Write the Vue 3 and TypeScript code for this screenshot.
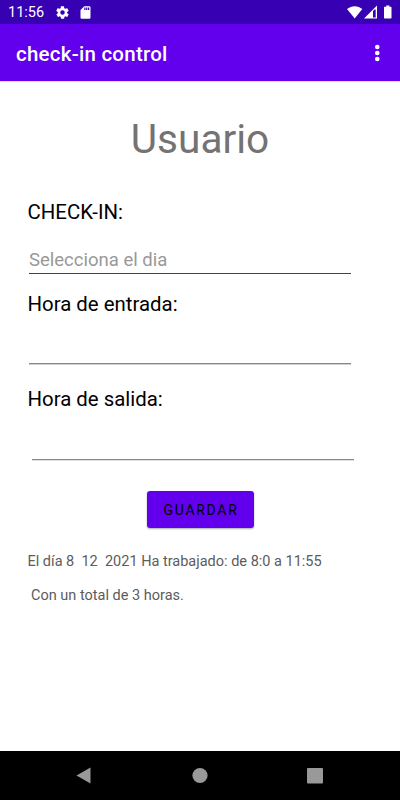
<script setup lang="ts">
import { ref } from 'vue'

const dia = ref('')
const entrada = ref('')
const salida = ref('')
const resumen = 'El día 8  12  2021 Ha trabajado: de 8:0 a 11:55'
const total = 'Con un total de 3 horas.'
</script>

<template>
  <div class="screen">
    <header class="status">
      <span class="clock">11:56</span>
      <svg class="gear" viewBox="0 0 24 24"><path d="M19.4 13c0-.3.1-.6.1-1s0-.7-.1-1l2.1-1.6c.2-.2.3-.4.1-.7l-2-3.4c-.1-.3-.4-.3-.6-.3l-2.5 1c-.5-.4-1.1-.7-1.7-1l-.4-2.6c0-.3-.2-.4-.5-.4h-4c-.2 0-.4.2-.5.4l-.4 2.6c-.6.3-1.1.6-1.7 1l-2.5-1c-.2-.1-.5 0-.6.3l-2 3.4c-.1.2-.1.5.1.7L4.6 11c-.1.3-.1.7-.1 1s0 .7.1 1l-2.1 1.6c-.2.2-.3.4-.1.7l2 3.4c.1.3.4.3.6.3l2.5-1c.5.4 1.1.7 1.7 1l.4 2.6c.1.3.3.4.5.4h4c.3 0 .5-.2.5-.4l.4-2.6c.6-.3 1.2-.6 1.7-1l2.5 1c.2.1.5 0 .6-.3l2-3.4c.1-.2.1-.5-.1-.7zM12 15.6a3.6 3.6 0 1 1 0-7.2 3.6 3.6 0 0 1 0 7.2z" /></svg>
      <svg class="card" viewBox="0 0 24 24"><path d="M18 2h-8L4 8v12c0 1.1.9 2 2 2h12c1.1 0 2-.9 2-2V4c0-1.1-.9-2-2-2zm-6 6h-2V4h2v4zm3 0h-2V4h2v4zm3 0h-2V4h2v4z" /></svg>
      <span class="spacer"></span>
      <svg class="system" viewBox="0 0 48 16">
        <path d="M1 4.1C5.5.2 12 .2 16.300 4.100L8.700 13.500z" />
        <path d="M18 13.500 31 .500V13.500zM27 6V12.500h2.700V4.500h-1.200z" fill-rule="evenodd" />
        <path d="M40.200.500h3.200v1.200h1.400q.7 0 .7.700v10.400q0 .7-.7.700h-6.100q-.7 0-.7-.7V2.400q0-.7.700-.7h1.500z" />
      </svg>
    </header>
    <div class="appbar">
      <h1>check-in control</h1>
      <button class="more" aria-label="Más opciones">
        <svg viewBox="0 0 6 18"><circle cx="3.300" cy="3" r="2.300" /><circle cx="3.300" cy="9" r="2.300" /><circle cx="3.300" cy="15" r="2.300" /></svg>
      </button>
    </div>
    <main class="content">
      <h2>Usuario</h2>
      <label class="label check" for="dia">CHECK-IN:</label>
      <input id="dia" v-model="dia" class="field day" placeholder="Selecciona el dia" />
      <label class="label entry" for="entrada">Hora de entrada:</label>
      <input id="entrada" v-model="entrada" class="field start" />
      <label class="label exit" for="salida">Hora de salida:</label>
      <input id="salida" v-model="salida" class="field end" />
      <button class="save">GUARDAR</button>
      <p class="summary">{{ resumen }}</p>
      <p class="total">{{ total }}</p>
    </main>
    <nav class="navbar">
      <svg viewBox="0 0 400 49">
        <path d="M76.500 24.500 90.500 16.500V32.500z" />
        <circle cx="200" cy="24.500" r="7.600" />
        <rect x="307" y="17" width="16" height="15.500" rx="1" />
      </svg>
    </nav>
  </div>
</template>

<style>
body {
  margin: 0;
  background: #fff;
}
</style>

<style scoped>
.screen {
  width: 400px;
  height: 800px;
  display: flex;
  flex-direction: column;
  overflow: hidden;
  background: #fff;
  font-family: Roboto, sans-serif;
}
svg {
  display: block;
  fill: #fff;
}
h1, h2, p {
  margin: 0;
  font-weight: 400;
}
button {
  border: 0;
  padding: 0;
  font-family: inherit;
}
.status {
  height: 24px;
  flex: none;
  display: flex;
  align-items: center;
  padding: 0 6px 0 8px;
  background: #3700b3;
  color: #fff;
}
.clock {
  width: 47px;
  font-size: 14.500px;
  line-height: 24px;
  padding-top: 2px;
}
.gear {
  width: 15px;
  height: 15px;
}
.card {
  width: 15px;
  height: 15px;
  margin-left: 8px;
}
.spacer {
  flex: 1;
}
.system {
  width: 48px;
  height: 16px;
  margin-top: 2px;
}
.appbar {
  height: 57px;
  flex: none;
  display: flex;
  align-items: center;
  justify-content: space-between;
  padding: 0 20px 0 16px;
  background: #6200ee;
  color: #fff;
  box-shadow: 0 1px 1px #0002;
}
h1 {
  font-size: 20.500px;
  font-weight: 500;
  line-height: 28px;
  letter-spacing: 0.250px;
  padding-top: 2px;
}
.more {
  background: none;
}
.more svg {
  width: 6px;
  height: 18px;
}
.content {
  flex: 1;
  display: flex;
  flex-direction: column;
  align-items: flex-start;
  padding: 34px 28px 0;
}
h2 {
  align-self: center;
  font-size: 40.600px;
  line-height: 48px;
  color: #737373;
}
.label {
  font-size: 20.400px;
  line-height: 24px;
  color: #000;
  margin-left: -0.500px;
}
.check {
  margin-top: 37px;
}
.entry {
  margin-top: 18px;
}
.exit {
  margin-top: 23px;
}
.field {
  box-sizing: border-box;
  width: 322px;
  height: 32px;
  margin: 19px 0 0 1px;
  padding: 4px 0 0;
  border: 0;
  border-bottom: 1px solid #888;
  border-radius: 0;
  outline: 0;
  background: transparent;
  font: 18.500px Roboto, sans-serif;
}
.field::placeholder {
  color: #999;
  opacity: 1;
}
.day {
  height: 31px;
  border-color: #444;
}
.start {
  height: 29px;
  box-shadow: 0 1px 0 #d0d0d0;
}
.end {
  width: 322.500px;
  height: 30px;
  margin-left: 3.500px;
  box-shadow: 0 1px 0 #e0e0e0;
}
.save {
  align-self: center;
  width: 107px;
  height: 37px;
  margin-top: 31px;
  padding: 1px 0 0 2px;
  border-radius: 3px;
  background: #6200ee;
  box-shadow: 0 1px 2px #0005;
  color: #000;
  font-size: 14px;
  font-weight: 400;
  letter-spacing: 1.700px;
}
.summary, .total {
  font-size: 14.500px;
  line-height: 20px;
  color: #5c5c5c;
  white-space: pre;
}
.summary {
  margin-top: 24px;
  margin-left: -0.500px;
}
.total {
  margin: 14px 0 0 3px;
}
.navbar {
  height: 49px;
  flex: none;
  background: #000;
}
.navbar svg {
  width: 400px;
  height: 49px;
  fill: #999;
}
</style>
